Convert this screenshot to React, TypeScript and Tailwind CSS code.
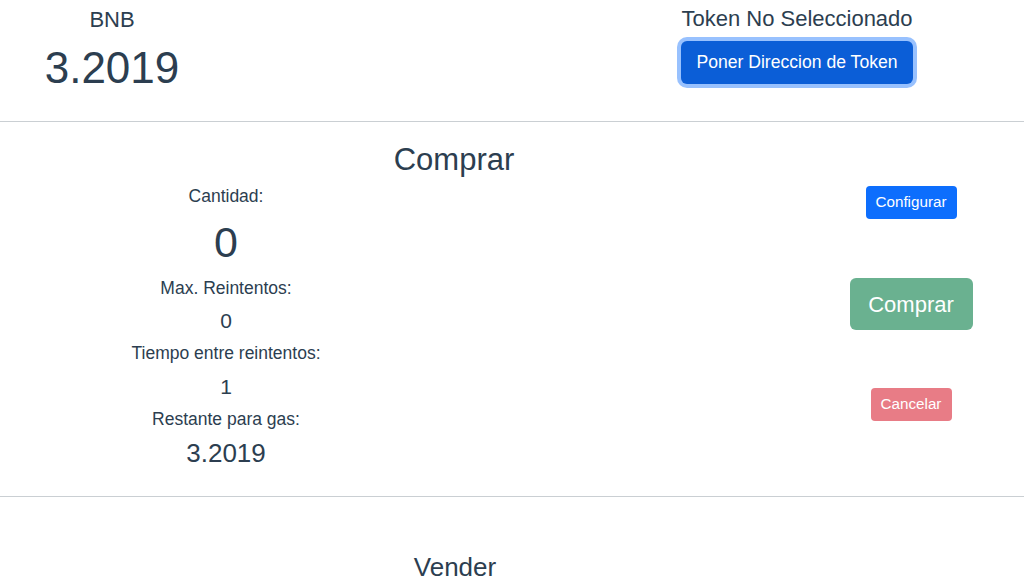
const font = { fontFamily: '"Liberation Sans", Arial, sans-serif' };

export default function App() {
  return (
    <div className="w-full bg-white text-[#2c3e50]" style={font}>
      {/* wallet header */}
      <div className="flex h-[121px]">
        <div className="w-[224px] flex flex-col items-center pt-[6.5px]">
          <div className="text-[22px] leading-[26px]">BNB</div>
          <div className="text-[44px] leading-[52px] mt-[9px]">3.2019</div>
        </div>
        <div className="ml-[373px] w-[400px] flex flex-col items-center pt-[5.5px]">
          <div className="text-[22px] leading-[26px]">Token No Seleccionado</div>
          <button className="mt-[9.5px] h-[43px] px-[15.5px] rounded-[6px] bg-[#0b5ed7] text-white text-[17.6px] shadow-[0_0_0_4px_rgba(49,132,253,0.5)]">
            Poner Direccion de Token
          </button>
        </div>
      </div>
      <div className="h-px bg-[#cacfd3]" />

      {/* comprar */}
      <div className="pt-[18.5px] h-[374px]">
        <h2 className="w-[908px] text-center text-[31px] leading-[37px]">Comprar</h2>
        <div className="flex mt-[8.5px]">
          <div className="w-[452px] flex flex-col items-center">
            <div className="text-[17.5px] leading-[21px]">Cantidad:</div>
            <div className="text-[43px] leading-[52px] mt-[9px]">0</div>
            <div className="text-[17.5px] leading-[21px] mt-[10px]">Max. Reintentos:</div>
            <div className="text-[21px] leading-[25px] mt-[9px]">0</div>
            <div className="text-[17.5px] leading-[21px] mt-[10px]">Tiempo entre reintentos:</div>
            <div className="text-[21px] leading-[25px] mt-[9.5px]">1</div>
            <div className="text-[17.5px] leading-[21px] mt-[10px]">Restante para gas:</div>
            <div className="text-[26px] leading-[31px] mt-[8px]">3.2019</div>
          </div>
          <div className="ml-auto mr-[13px] w-[200px] flex flex-col items-center">
            <button className="h-[33px] w-[91px] rounded-[4px] bg-[#0d6efd] text-white text-[15.2px]">
              Configurar
            </button>
            <button className="mt-[59px] h-[52px] w-[123px] rounded-[6px] bg-[#6ab190] text-white text-[22px]">
              Comprar
            </button>
            <button className="mt-[58px] h-[33px] w-[81px] rounded-[4px] bg-[#e87c86] text-white text-[15.2px]">
              Cancelar
            </button>
          </div>
        </div>
      </div>
      <div className="h-px bg-[#cacfd3]" />

      {/* vender */}
      <div className="pt-[55px]">
        <h3 className="w-[910px] text-center text-[26px] leading-[31px]">Vender</h3>
      </div>
    </div>
  );
}
